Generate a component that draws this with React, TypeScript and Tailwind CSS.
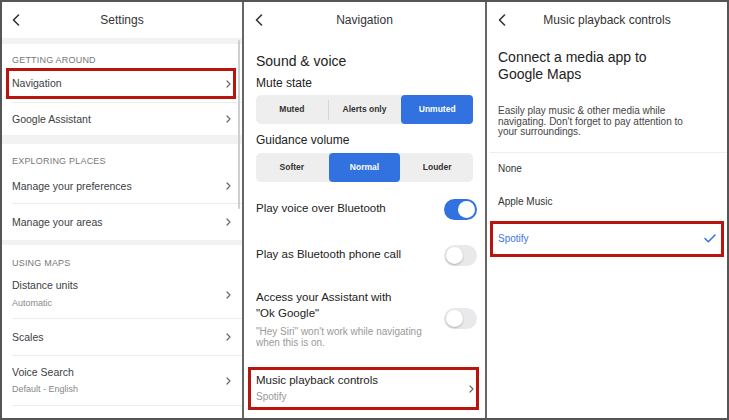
import React from "react";

const BLUE = "#3171e0";

function BackChevron() {
  return (
    <svg width="8" height="12" viewBox="0 0 8 12" fill="none">
      <polyline points="6.5,1 1.5,6 6.5,11" stroke="#333" strokeWidth="1.6" strokeLinecap="round" strokeLinejoin="round" />
    </svg>
  );
}

function RowChevron() {
  return (
    <svg width="5" height="8" viewBox="0 0 5 8" fill="none">
      <polyline points="1,1 4,4 1,7" stroke="#666" strokeWidth="1.2" strokeLinecap="round" strokeLinejoin="round" />
    </svg>
  );
}

function Check() {
  return (
    <svg width="12" height="9" viewBox="0 0 12 9" fill="none">
      <polyline points="1,4.5 4.3,7.8 11,1" stroke={BLUE} strokeWidth="1.5" strokeLinecap="round" strokeLinejoin="round" />
    </svg>
  );
}

function Header({ title, left }: { title: string; left: string }) {
  return (
    <div className="grid h-[36px] shrink-0 grid-cols-[40px_1fr_40px] items-center">
      <div className={`flex items-center ${left}`}>
        <BackChevron />
      </div>
      <div className="whitespace-nowrap text-center text-[12px] text-[#333]">{title}</div>
      <div />
    </div>
  );
}

function Toggle({ on }: { on?: boolean }) {
  return on ? (
    <div className="flex h-[21px] w-[33px] shrink-0 items-center justify-end rounded-full bg-[#3171e0] p-[2px]">
      <div className="h-[17px] w-[17px] rounded-full bg-white" />
    </div>
  ) : (
    <div className="flex h-[21px] w-[33px] shrink-0 items-center rounded-full bg-[#e9e9eb] p-[2px]">
      <div className="h-[17px] w-[17px] rounded-full bg-white shadow-[0_1px_2px_rgba(0,0,0,0.25)]" />
    </div>
  );
}

function Segmented({ options, active, className }: { options: string[]; active: number; className: string }) {
  const items: React.ReactNode[] = [];
  options.forEach((o, i) => {
    if (i > 0) {
      const showSep = i - 1 !== active && i !== active;
      items.push(
        <div key={`s${i}`} className={`h-[20px] w-px self-center ${showSep ? "bg-[#d6d6d6]" : "bg-transparent"}`} />
      );
    }
    items.push(
      <div
        key={o}
        className={`flex flex-1 items-center justify-center text-[8.5px] font-bold ${
          i === active ? "rounded-[4px] bg-[#3171e0] text-white" : "text-[#333]"
        }`}
      >
        {o}
      </div>
    );
  });
  return <div className={`mx-[12px] flex h-[29px] rounded-[5px] bg-[#eeeeef] ${className}`}>{items}</div>;
}

function Band({ h }: { h: string }) {
  return <div className={`${h} shrink-0 bg-[#f2f2f2]`} />;
}

function Label({ text, h, pt }: { text: string; h: string; pt: string }) {
  return (
    <div className={`${h} ${pt} shrink-0 pl-[10px] text-[9px] leading-[12px] tracking-[0.2px] text-[#777]`}>{text}</div>
  );
}

function Divider() {
  return <div className="ml-[10px] h-px shrink-0 bg-[#ececec]" />;
}

function Row({ title, h }: { title: string; h: string }) {
  return (
    <div className={`flex ${h} shrink-0 items-center justify-between pl-[10px] pr-[11px]`}>
      <div className="text-[10.5px] leading-[14px] text-[#3c4043]">{title}</div>
      <RowChevron />
    </div>
  );
}

function Panel1() {
  return (
    <div className="relative flex w-[240px] shrink-0 flex-col bg-white">
      <Header title="Settings" left="pl-[10px]" />
      <Band h="h-[6px]" />
      <Label text="GETTING AROUND" h="h-[23px]" pt="pt-[10px]" />
      <div className="h-[35px] shrink-0 pt-[1px]">
        <div className="ml-[4px] mr-[6px] flex h-[31px] items-center justify-between border-[3px] border-[#b8150f] pl-[3px] pr-[2px]">
          <span className="text-[10.5px] text-[#3c4043]">Navigation</span>
          <RowChevron />
        </div>
      </div>
      <Divider />
      <Row title="Google Assistant" h="h-[32px]" />
      <Band h="h-[9px]" />
      <Label text="EXPLORING PLACES" h="h-[25px]" pt="pt-[11px]" />
      <Row title="Manage your preferences" h="h-[34px]" />
      <Divider />
      <Row title="Manage your areas" h="h-[36px]" />
      <Band h="h-[5px]" />
      <Label text="USING MAPS" h="h-[27px]" pt="pt-[12px]" />
      <div className="flex h-[46px] shrink-0 items-center justify-between pl-[10px] pr-[11px]">
        <div className="self-start pt-[6px]">
          <div className="text-[10.5px] leading-[14px] text-[#3c4043]">Distance units</div>
          <div className="mt-[5px] text-[9px] leading-[12px] text-[#888]">Automatic</div>
        </div>
        <RowChevron />
      </div>
      <Divider />
      <Row title="Scales" h="h-[36px]" />
      <Divider />
      <div className="flex h-[49px] shrink-0 items-center justify-between pl-[10px] pr-[11px]">
        <div className="self-start pt-[9px]">
          <div className="text-[10.5px] leading-[14px] text-[#3c4043]">Voice Search</div>
          <div className="mt-[4px] text-[9px] leading-[12px] text-[#888]">Default - English</div>
        </div>
        <RowChevron />
      </div>
      <Divider />
      <div className="absolute right-[2px] top-[38px] h-[169px] w-[2px] rounded-full bg-[#cfcfcf]" />
    </div>
  );
}

function Panel2() {
  return (
    <div className="flex w-[241px] shrink-0 flex-col bg-white text-[#222]">
      <Header title="Navigation" left="pl-[11px]" />
      <div className="mt-[12px] pl-[12px] text-[14px] leading-[22px]">Sound &amp; voice</div>
      <div className="pl-[12px] text-[12px] leading-[22px]">Mute state</div>
      <Segmented options={["Muted", "Alerts only", "Unmuted"]} active={2} className="mt-[1px]" />
      <div className="mt-[5px] pl-[12px] text-[12px] leading-[22px]">Guidance volume</div>
      <Segmented options={["Softer", "Normal", "Louder"]} active={1} className="mt-[2px]" />
      <div className="flex h-[54px] shrink-0 items-center justify-between pl-[12px] pr-[8px]">
        <span className="text-[11.5px]">Play voice over Bluetooth</span>
        <Toggle on />
      </div>
      <div className="flex h-[38px] shrink-0 items-center justify-between pl-[12px] pr-[8px]">
        <span className="text-[11.5px]">Play as Bluetooth phone call</span>
        <Toggle />
      </div>
      <div className="flex shrink-0 items-center justify-between pb-[14px] pl-[12px] pr-[8px] pt-[15px]">
        <div>
          <div className="text-[11.5px] leading-[16px]">
            Access your Assistant with
            <br />
            {'"Ok Google"'}
          </div>
          <div className="mt-[5px] text-[10px] leading-[11px] text-[#9a9a9a]">
            {'"Hey Siri" won\'t work while navigating'}
            <br />
            when this is on.
          </div>
        </div>
        <Toggle />
      </div>
      <div className="ml-[4px] mr-[6px] mt-[5px] flex h-[43px] shrink-0 items-center justify-between border-[3px] border-[#b8150f] pl-[5px] pr-[2px]">
        <div className="self-start pt-[3px]">
          <div className="text-[11.5px] leading-[14px]">Music playback controls</div>
          <div className="mt-[3px] text-[10px] leading-[14px] text-[#999]">Spotify</div>
        </div>
        <RowChevron />
      </div>
    </div>
  );
}

function Panel3() {
  return (
    <div className="flex w-[240px] shrink-0 flex-col bg-white text-[#222]">
      <Header title="Music playback controls" left="pl-[11px]" />
      <div className="mt-[11px] pl-[11px] text-[14px] leading-[17px]">
        Connect a media app to
        <br />
        Google Maps
      </div>
      <div className="mt-[23px] pl-[11px] text-[10px] leading-[10.5px] text-[#444]">
        Easily play music &amp; other media while
        <br />
        {"navigating. Don't forget to pay attention to"}
        <br />
        your surroundings.
      </div>
      <div className="ml-[3px] mt-[14px] h-px shrink-0 bg-[#eeeeee]" />
      <div className="flex h-[31px] shrink-0 items-center pl-[11px] text-[10px] text-[#333]">None</div>
      <div className="flex h-[35px] shrink-0 items-center pl-[11px] text-[10px] text-[#333]">Apple Music</div>
      <div className="mx-[3px] mt-[2px] flex h-[36px] shrink-0 items-center justify-between border-[3px] border-[#b8150f] pl-[5px] pr-[5px]">
        <span className="text-[10px] text-[#3b78e7]">Spotify</span>
        <Check />
      </div>
    </div>
  );
}

export default function App() {
  return (
    <div className="flex h-[420px] w-[729px] overflow-hidden border-2 border-[#555] bg-white font-['Liberation_Sans',Arial,sans-serif]">
      <Panel1 />
      <div className="w-[2px] shrink-0 bg-[#666]" />
      <Panel2 />
      <div className="w-[2px] shrink-0 bg-[#666]" />
      <Panel3 />
    </div>
  );
}
